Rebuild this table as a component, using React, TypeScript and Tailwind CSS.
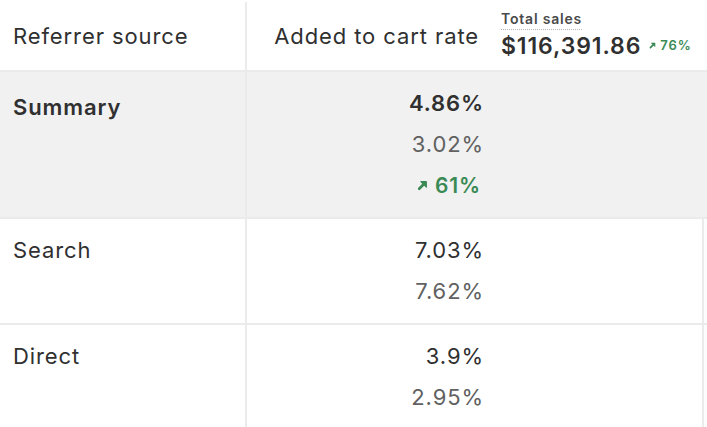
import React from 'react'

interface Row {
  label: string
  value: string
  previous: string
  change?: string
  summary?: boolean
}

const ROWS: Row[] = [
  { label: 'Summary', value: '4.86%', previous: '3.02%', change: '61%', summary: true },
  { label: 'Search', value: '7.03%', previous: '7.62%' },
  { label: 'Direct', value: '3.9%', previous: '2.95%' },
]

function UpArrow({ className }: { className?: string }) {
  return (
    <svg viewBox="0 0 10 10" className={className} fill="none">
      <path d="M2 8L7 3" stroke="currentColor" strokeWidth="2.4" strokeLinecap="round" />
      <path d="M3.5 1.5H8.5V6.5Z" fill="currentColor" stroke="currentColor" strokeWidth="1" strokeLinejoin="round" />
    </svg>
  )
}

export default function App() {
  return (
    <div className="w-[707px] h-[427px] overflow-hidden bg-white font-['Inter',sans-serif] text-[#303030] tracking-[0.9px]">
      <div className="flex h-[72px] pt-[2px] border-b-2 border-[#ebebeb]">
        <div className="w-[247px] border-r-2 border-[#ebebeb] pl-[13px] flex items-center text-[22px]">
          Referrer source
        </div>
        <div className="flex items-center">
          <div className="w-[232px] text-right text-[22px]">Added to cart rate</div>
          <div className="ml-[22px] flex flex-col pb-[2px]">
            <span className="self-start text-[14px] font-semibold text-[#4a4a4a] leading-[16px] tracking-[0.8px] border-b border-dotted border-[#b5b5b5] pb-[2px]">
              Total sales
            </span>
            <div className="flex items-center mt-[2px]">
              <span className="text-[23px] font-semibold leading-[28px] text-[#303030]">$116,391.86</span>
              <span className="ml-[8px] flex items-center gap-[4px] text-[13px] font-semibold text-[#3a8a55]">
                <UpArrow className="w-[7px] h-[7px]" />
                76%
              </span>
            </div>
          </div>
        </div>
      </div>

      {ROWS.map((row) => (
        <div
          key={row.label}
          className={
            row.summary
              ? 'flex bg-[#f1f1f1] border-b-2 border-[#ebebeb]'
              : 'flex border-b-2 border-[#ebebeb]'
          }
        >
          <div
            className={
              row.summary
                ? 'w-[247px] border-r-2 border-[#ebebeb] pl-[13px] pt-[15px] text-[22px] font-semibold leading-[41px]'
                : 'w-[247px] border-r-2 border-[#ebebeb] pl-[13px] pt-[11px] text-[22px] leading-[41px]'
            }
          >
            {row.label}
          </div>
          <div
            className={
              row.summary
                ? 'w-[460px] py-[11px]'
                : 'w-[457px] py-[11px] border-r-2 border-[#ebebeb]'
            }
          >
            <div className="w-[237px] flex flex-col items-end text-[22px] leading-[41px]">
              <span className={row.summary ? 'font-semibold' : ''}>{row.value}</span>
              <span className="text-[#616161]">{row.previous}</span>
              {row.change && (
                <span className="flex items-center gap-[7px] pr-[3px] font-semibold text-[#3a8a55] text-[21px]">
                  <UpArrow className="w-[11px] h-[11px]" />
                  {row.change}
                </span>
              )}
            </div>
          </div>
        </div>
      ))}
    </div>
  )
}
